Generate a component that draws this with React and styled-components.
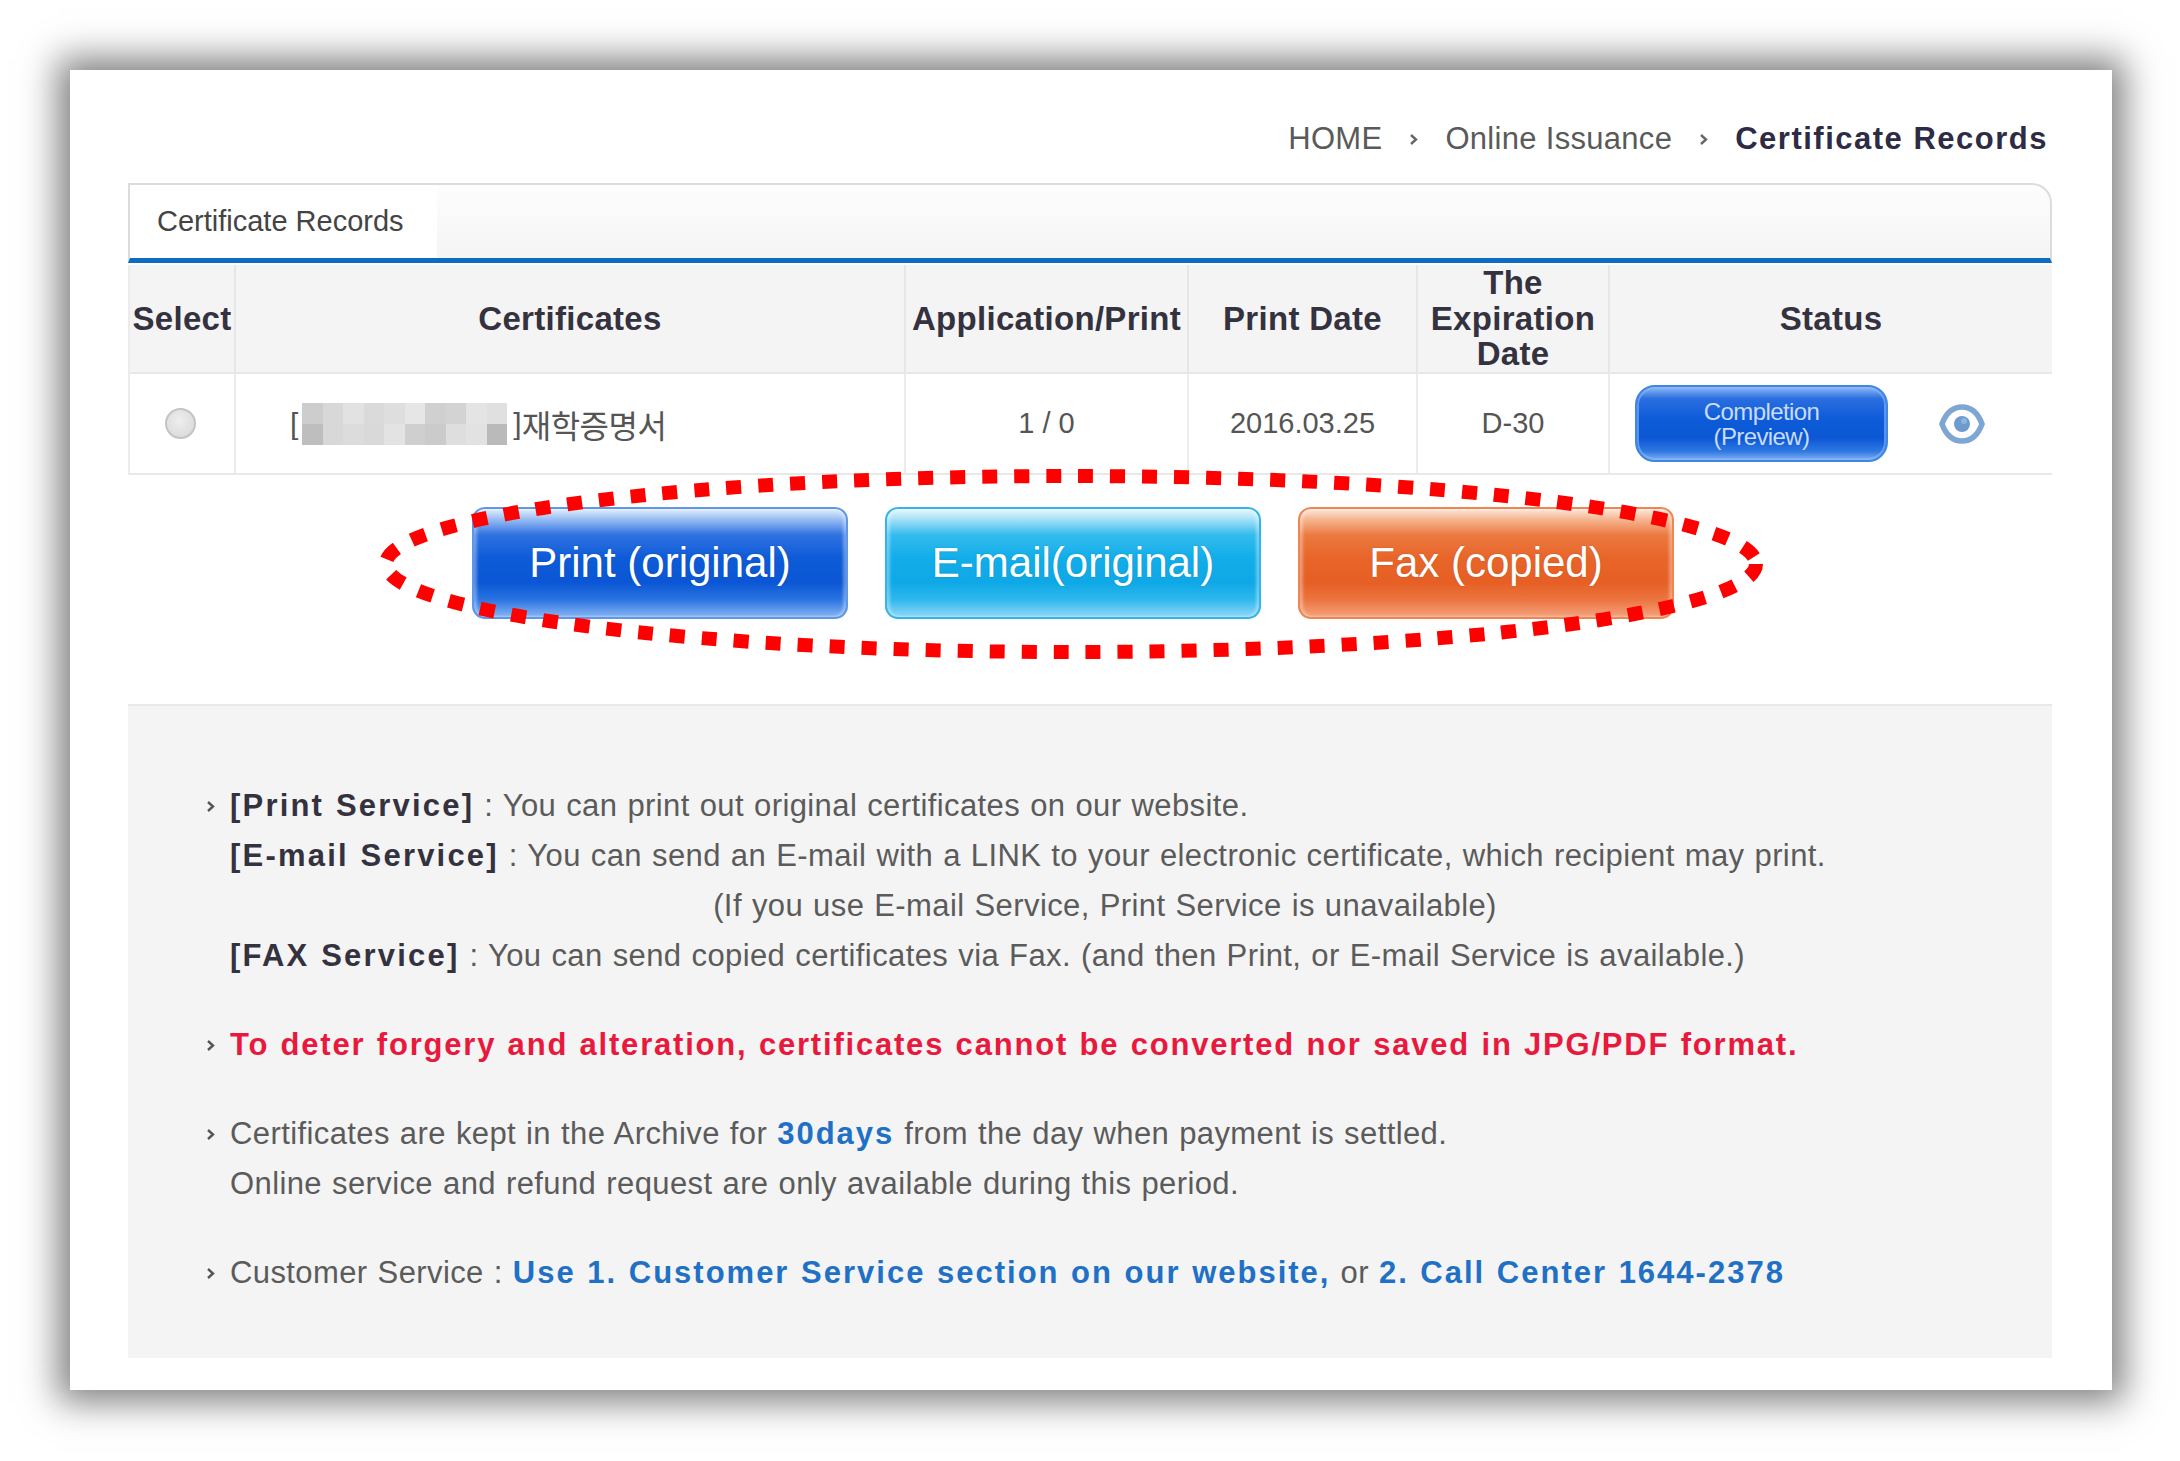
import React from "react";
import styled, { createGlobalStyle } from "styled-components";

const GlobalStyle = createGlobalStyle`
  html, body {
    margin: 0;
    padding: 0;
    background: #fff;
  }
  body {
    font-family: "Liberation Sans", Arial, sans-serif;
  }
`;

const Page = styled.div`
  width: 2180px;
  height: 1461px;
  padding: 70px 68px 0 70px;
  box-sizing: border-box;
  overflow: hidden;
`;

const Card = styled.div`
  width: 2042px;
  height: 1320px;
  background: #fff;
  box-shadow: 0 0 34px 12px rgba(0, 0, 0, 0.5);
  padding: 49px 60px 0 58px;
  box-sizing: border-box;
`;

const Breadcrumb = styled.div`
  display: flex;
  justify-content: flex-end;
  align-items: center;
  gap: 27px;
  height: 40px;
  padding-right: 4px;
  margin-bottom: 24px;
  font-size: 31px;
`;

const Crumb = styled.span`
  color: ${(p) => (p.$current ? "#2e2b45" : "#5a5a5a")};
  font-weight: ${(p) => (p.$current ? 700 : 400)};
  letter-spacing: ${(p) => (p.$current ? "1.5px" : "0.3px")};
`;

const Chevron = ({ color = "#666" }) => (
  <svg width="9" height="13" viewBox="0 0 9 13">
    <path d="M2 2 L7 6.5 L2 11" fill="none" stroke={color} strokeWidth="2.4" />
  </svg>
);

const PanelHeader = styled.div`
  display: flex;
  align-items: stretch;
  height: 73px;
  border: 2px solid #dcdcdc;
  border-bottom: 5px solid #0b6cc1;
  border-top-right-radius: 20px;
  background: linear-gradient(#fdfdfd, #f5f5f5);
`;

const PanelTitle = styled.div`
  display: flex;
  align-items: center;
  width: 307px;
  padding-left: 27px;
  box-sizing: border-box;
  background: #fff;
  font-size: 29px;
  color: #444;
`;

const Table = styled.div`
  margin-top: 2px;
  border-left: 2px solid #ececec;
`;

const Row = styled.div`
  display: grid;
  grid-template-columns: 106px 670px 283px 229px 192px 442px;
  height: ${(p) => p.$height}px;
  background: ${(p) => (p.$head ? "#f4f4f4" : "#fff")};
  border-bottom: 2px solid #e8e8e8;
  box-sizing: border-box;
`;

const HeadCell = styled.div`
  display: flex;
  align-items: center;
  justify-content: center;
  text-align: center;
  font-size: 33px;
  line-height: 35.5px;
  font-weight: 700;
  letter-spacing: 0.3px;
  color: #34323f;
  border-right: ${(p) => (p.$last ? "none" : "2px solid #e6e6e6")};
`;

const Cell = styled.div`
  display: flex;
  align-items: center;
  justify-content: ${(p) => p.$align || "center"};
  padding-left: ${(p) => p.$pad || 0}px;
  font-size: 29px;
  color: #555;
  border-right: ${(p) => (p.$last ? "none" : "2px solid #ececec")};
`;

const Radio = styled.span`
  width: 27px;
  height: 27px;
  margin-left: -4px;
  border-radius: 50%;
  border: 2px solid #c4c4c4;
  background: radial-gradient(circle at 45% 40%, #eeeeee, #d6d6d6);
`;

const CertName = styled.span`
  display: flex;
  align-items: center;
  font-family: "Liberation Sans", "Noto Sans CJK KR", sans-serif;
  font-size: 30px;
  color: #555;
`;

const Hangul = styled.span`
  font-family: "Noto Sans CJK KR", sans-serif;
  font-size: 32px;
  letter-spacing: -0.5px;
`;

const Mosaic = styled.span`
  display: grid;
  grid-template-columns: repeat(10, 20.5px);
  grid-template-rows: 21px 21px;
  margin: 0 6px 0 4px;
`;

const Tile = styled.span`
  background: ${(p) => p.$shade};
`;

const tiles = [
  "#cdcdcd", "#d8d8d8", "#e2e2e2", "#dadada", "#dedede", "#e6e6e6", "#d0d0d0", "#d3d3d3", "#e4e4e4", "#e0e0e0",
  "#bebebe", "#d8d8d8", "#dcdcdc", "#d9d9d9", "#e3e3e3", "#cfcfcf", "#cbcbcb", "#dedede", "#e2e2e2", "#bababa",
];

const StatusBox = styled.div`
  display: flex;
  align-items: center;
  padding-left: 25px;
  gap: 50px;
`;

const StatusButton = styled.div`
  width: 253px;
  height: 77px;
  box-sizing: border-box;
  border-radius: 20px;
  border: 2px solid #3f86e6;
  background: linear-gradient(#8fb9f3 0%, #2a6ee0 16%, #0d5bd8 45%, #0b57d4 70%, #2f78e3 88%, #7eaef0 100%);
  box-shadow: inset 0 0 0 2px rgba(140, 185, 245, 0.6);
  display: flex;
  flex-direction: column;
  align-items: center;
  justify-content: center;
  color: #c9dcfb;
  font-size: 24px;
  line-height: 25px;
  letter-spacing: -0.6px;
`;

const ViewIcon = () => (
  <svg width="48" height="46" viewBox="-24 -23 48 46">
    <path
      d="M-20,0 C-16,-11 -9,-17 0,-17 C9,-17 16,-11 20,0 C16,11 9,17 0,17 C-9,17 -16,11 -20,0Z"
      fill="#fff"
      stroke="#7ea6d4"
      strokeWidth="5.5"
    />
    <circle cx="0" cy="0" r="8" fill="#6d9bd0" />
    <circle cx="2" cy="-3" r="3" fill="#8fb4de" />
  </svg>
);

const ButtonRow = styled.div`
  position: relative;
  display: flex;
  justify-content: center;
  gap: 37px;
  padding: 32px 34px 85px 0;
`;

const palettes = {
  blue: {
    grad: "linear-gradient(#e4eefc 0%, #9cc0f4 9%, #2f72e1 24%, #0e5bd8 45%, #0a56d4 68%, #2a74e2 84%, #86b5f2 100%)",
    edge: "#5e97ea",
  },
  cyan: {
    grad: "linear-gradient(#eaf8fe 0%, #a9e2f8 9%, #34bbee 24%, #12aee9 45%, #0ea8e6 68%, #2eb8ee 84%, #8fd7f6 100%)",
    edge: "#35b4ec",
  },
  orange: {
    grad: "linear-gradient(#fde9de 0%, #f6b894 9%, #ec7a40 24%, #e8652a 45%, #e65f24 68%, #ec7440 84%, #f4a27c 100%)",
    edge: "#ee8652",
  },
};

const BigButton = styled.div`
  width: 376px;
  height: 112px;
  box-sizing: border-box;
  border-radius: 13px;
  border: 2px solid ${(p) => palettes[p.$tone].edge};
  background: ${(p) => palettes[p.$tone].grad};
  box-shadow: inset 3px 0 3px rgba(255, 255, 255, 0.35), inset -3px 0 3px rgba(255, 255, 255, 0.35);
  display: flex;
  align-items: center;
  justify-content: center;
  color: #fff;
  font-size: 42px;
  text-shadow: 0 0 2px rgba(0, 0, 0, 0.15);
`;

const Marker = styled.svg`
  position: absolute;
  left: 0;
  top: 0;
  overflow: visible;
  pointer-events: none;
`;

const InfoBox = styled.div`
  height: 654px;
  box-sizing: border-box;
  background: #f4f4f4;
  border-top: 2px solid #e9e9e9;
  padding: 75px 72px 0 78px;
`;

const Group = styled.div`
  display: flex;
  margin-bottom: 39px;
`;

const Bullet = styled.div`
  width: 24px;
  height: 50px;
  flex-shrink: 0;
  display: flex;
  align-items: center;
`;

const Lines = styled.div`
  flex: 1;
`;

const Line = styled.div`
  font-size: 31px;
  line-height: 50px;
  letter-spacing: 0.4px;
  word-spacing: 1px;
  color: #5b5b5b;
  white-space: nowrap;
  text-align: ${(p) => (p.$center ? "center" : "left")};
`;

const Label = styled.b`
  color: #34323f;
  font-weight: 700;
  letter-spacing: 2.2px;
`;

const Alert = styled.span`
  color: #e8193c;
  font-weight: 700;
  letter-spacing: 1.8px;
`;

const Accent = styled.span`
  color: #2070c6;
  font-weight: 700;
  letter-spacing: 2px;
`;

export default function App() {
  return (
    <>
      <GlobalStyle />
      <Page>
        <Card>
          <Breadcrumb>
            <Crumb>HOME</Crumb>
            <Chevron />
            <Crumb>Online Issuance</Crumb>
            <Chevron />
            <Crumb $current>Certificate Records</Crumb>
          </Breadcrumb>

          <PanelHeader>
            <PanelTitle>Certificate Records</PanelTitle>
          </PanelHeader>

          <Table>
            <Row $head $height={109}>
              <HeadCell>Select</HeadCell>
              <HeadCell>Certificates</HeadCell>
              <HeadCell>Application/Print</HeadCell>
              <HeadCell>Print Date</HeadCell>
              <HeadCell>
                The
                <br />
                Expiration
                <br />
                Date
              </HeadCell>
              <HeadCell $last>Status</HeadCell>
            </Row>
            <Row $height={101}>
              <Cell>
                <Radio />
              </Cell>
              <Cell $align="flex-start" $pad={54}>
                <CertName>
                  [
                  <Mosaic>
                    {tiles.map((c, i) => (
                      <Tile key={i} $shade={c} />
                    ))}
                  </Mosaic>
                  ]<Hangul>재학증명서</Hangul>
                </CertName>
              </Cell>
              <Cell>1 / 0</Cell>
              <Cell>2016.03.25</Cell>
              <Cell>D-30</Cell>
              <Cell $last $align="flex-start">
                <StatusBox>
                  <StatusButton>
                    <span>Completion</span>
                    <span>(Preview)</span>
                  </StatusButton>
                  <ViewIcon />
                </StatusBox>
              </Cell>
            </Row>
          </Table>

          <ButtonRow>
            <BigButton $tone="blue">Print (original)</BigButton>
            <BigButton $tone="cyan">E-mail(original)</BigButton>
            <BigButton $tone="orange">Fax (copied)</BigButton>
            <Marker width="1924" height="229">
              <ellipse
                cx="943"
                cy="89"
                rx="685"
                ry="88"
                fill="none"
                stroke="#ff0000"
                strokeWidth="14"
                strokeDasharray="15 17"
              />
            </Marker>
          </ButtonRow>

          <InfoBox>
            <Group>
              <Bullet>
                <Chevron color="#555" />
              </Bullet>
              <Lines>
                <Line>
                  <Label>[Print Service]</Label> : You can print out original certificates on our website.
                </Line>
                <Line>
                  <Label>[E-mail Service]</Label> : You can send an E-mail with a LINK to your electronic certificate, which recipient may print.
                </Line>
                <Line $center>(If you use E-mail Service, Print Service is unavailable)</Line>
                <Line>
                  <Label>[FAX Service]</Label> : You can send copied certificates via Fax. (and then Print, or E-mail Service is available.)
                </Line>
              </Lines>
            </Group>
            <Group>
              <Bullet>
                <Chevron color="#555" />
              </Bullet>
              <Lines>
                <Line>
                  <Alert>
                    To deter forgery and alteration, certificates cannot be converted nor saved in JPG/PDF format.
                  </Alert>
                </Line>
              </Lines>
            </Group>
            <Group>
              <Bullet>
                <Chevron color="#555" />
              </Bullet>
              <Lines>
                <Line>
                  Certificates are kept in the Archive for <Accent>30days</Accent> from the day when payment is settled.
                </Line>
                <Line>Online service and refund request are only available during this period.</Line>
              </Lines>
            </Group>
            <Group>
              <Bullet>
                <Chevron color="#555" />
              </Bullet>
              <Lines>
                <Line>
                  Customer Service : <Accent>Use 1. Customer Service section on our website,</Accent> or{" "}
                  <Accent>2. Call Center 1644-2378</Accent>
                </Line>
              </Lines>
            </Group>
          </InfoBox>
        </Card>
      </Page>
    </>
  );
}
